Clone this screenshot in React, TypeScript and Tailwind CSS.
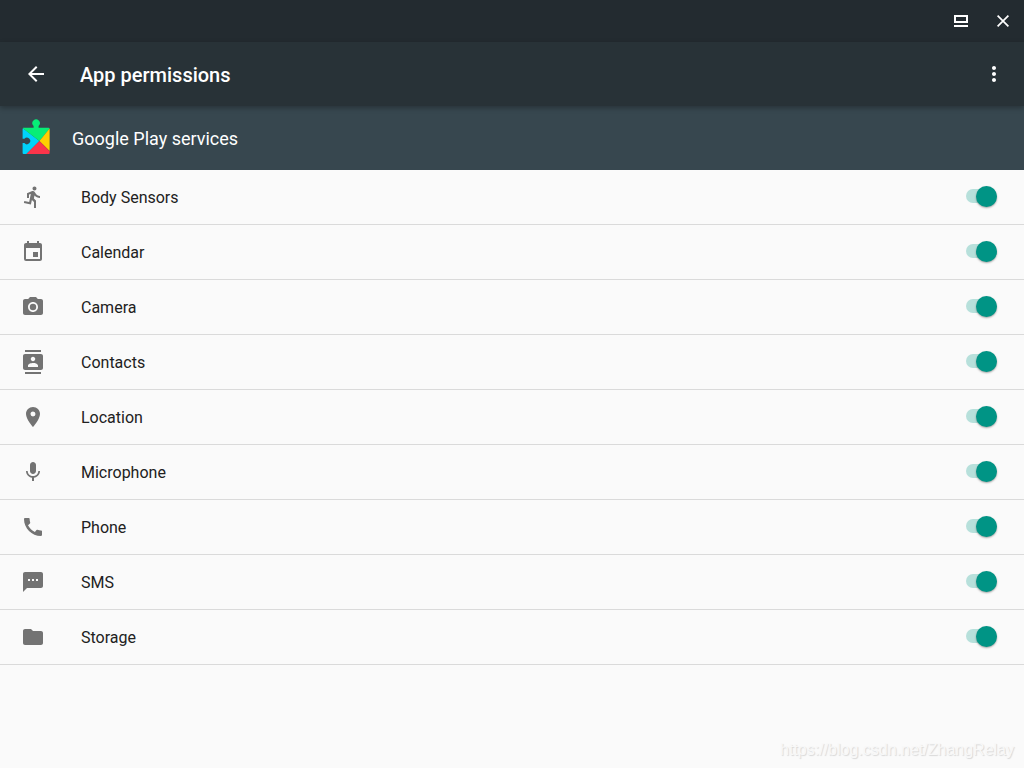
import { useState } from "react";
import type { IconType } from "react-icons";
import {
  MdArrowBack,
  MdCall,
  MdCameraAlt,
  MdContacts,
  MdDirectionsRun,
  MdEvent,
  MdFolder,
  MdMic,
  MdMoreVert,
  MdPlace,
  MdTextsms,
} from "react-icons/md";

type Permission = { id: string; name: string; icon: IconType };

const permissions: Permission[] = [
  { id: "sensors", name: "Body Sensors", icon: MdDirectionsRun },
  { id: "calendar", name: "Calendar", icon: MdEvent },
  { id: "camera", name: "Camera", icon: MdCameraAlt },
  { id: "contacts", name: "Contacts", icon: MdContacts },
  { id: "location", name: "Location", icon: MdPlace },
  { id: "microphone", name: "Microphone", icon: MdMic },
  { id: "phone", name: "Phone", icon: MdCall },
  { id: "sms", name: "SMS", icon: MdTextsms },
  { id: "storage", name: "Storage", icon: MdFolder },
];

function WindowBar() {
  return (
    <div className="flex h-[42px] justify-end bg-[#232b30] text-white">
      <button type="button" aria-label="Restore window" className="flex size-[42px] items-center justify-center">
        <svg viewBox="0 0 14 12" className="h-3 w-3.5" fill="currentColor" aria-hidden="true">
          <path fillRule="evenodd" d="M0 0h14v8H0zM2 2v4h10V2zM0 10h14v2H0z" />
        </svg>
      </button>
      <button type="button" aria-label="Close window" className="flex size-[42px] items-center justify-center">
        <svg viewBox="0 0 12 12" className="size-3" fill="none" stroke="currentColor" strokeWidth="1.7" aria-hidden="true">
          <path d="M.6.6l10.8 10.8M11.4.6L.6 11.4" />
        </svg>
      </button>
    </div>
  );
}

function Toolbar() {
  return (
    <header className="relative flex h-16 items-center bg-[#283237] pr-[18px] pl-6 text-white shadow-[0_2px_5px_rgba(0,0,0,0.28)]">
      <button type="button" aria-label="Back" className="mr-8">
        <MdArrowBack className="size-6" />
      </button>
      <h1 className="flex-1 pt-0.5 text-xl font-medium">App permissions</h1>
      <button type="button" aria-label="More options">
        <MdMoreVert className="size-6" />
      </button>
    </header>
  );
}

function PlayServicesIcon() {
  return (
    <svg viewBox="0 0 28 36" className="h-9 w-7" aria-hidden="true">
      <path
        fill="#00d3fb"
        d="M1 9.2L17.4 22 4.5 35H1.6a1 1 0 0 1-1-1v-9.9h1.8a3.3 3.3 0 1 0 0-4.4H.6V10z"
      />
      <path
        fill="#07ee77"
        d="M1.2 8.8h10.4V6.9a3.7 3.7 0 1 1 5 0v1.9h10q.8 0 .9.9L17.4 22 .8 9.3z"
      />
      <path fill="#ffce00" d="M27.6 9.5v22.6L17.4 22z" />
      <path fill="#fb344a" d="M17.4 22l10.2 10.2V34a1 1 0 0 1-1 1H4.4z" />
    </svg>
  );
}

function PermissionRow({ permission }: { permission: Permission }) {
  const [granted, setGranted] = useState(true);
  const Icon = permission.icon;
  return (
    <li className="border-b border-[#dadada]">
      <label htmlFor={permission.id} className="flex h-[54px] items-center pr-[27px] pl-[21px]">
        <Icon className="size-6 text-[#737373]" aria-hidden="true" />
        <span className="flex-1 pt-0.5 pl-9 text-base text-[#212121]">{permission.name}</span>
        <input
          id={permission.id}
          type="checkbox"
          role="switch"
          checked={granted}
          onChange={(event) => setGranted(event.target.checked)}
          className="peer sr-only"
        />
        <span className="mb-0.5 flex h-3.5 w-[31px] items-center rounded-full bg-[#c4c4c4] peer-checked:justify-end peer-checked:bg-[#b7e0db] peer-checked:*:bg-[#009485]">
          <span className="mt-px size-[21px] shrink-0 rounded-full bg-[#f1f1f1] shadow-[0_1px_2px_rgba(0,0,0,0.35)]" />
        </span>
      </label>
    </li>
  );
}

export default function App() {
  return (
    <div className="flex min-h-screen flex-col bg-[#fafafa] font-[Roboto,sans-serif]">
      <WindowBar />
      <Toolbar />
      <section className="flex h-16 items-center bg-[#37474f] pb-0.5 pl-[22px]">
        <PlayServicesIcon />
        <h2 className="pt-1 pl-[22px] text-lg text-white">Google Play services</h2>
      </section>
      <main className="flex-1">
        <ul>
          {permissions.map((permission) => (
            <PermissionRow key={permission.id} permission={permission} />
          ))}
        </ul>
      </main>
      <footer className="flex justify-end pr-2.5 pb-1.5">
        <a
          href="https://blog.csdn.net/ZhangRelay"
          className="font-['Liberation_Sans',sans-serif] text-base text-[#f8f8f8] [text-shadow:1px_1px_1px_#d8d8d8]"
        >
          https://blog.csdn.net/ZhangRelay
        </a>
      </footer>
    </div>
  );
}
